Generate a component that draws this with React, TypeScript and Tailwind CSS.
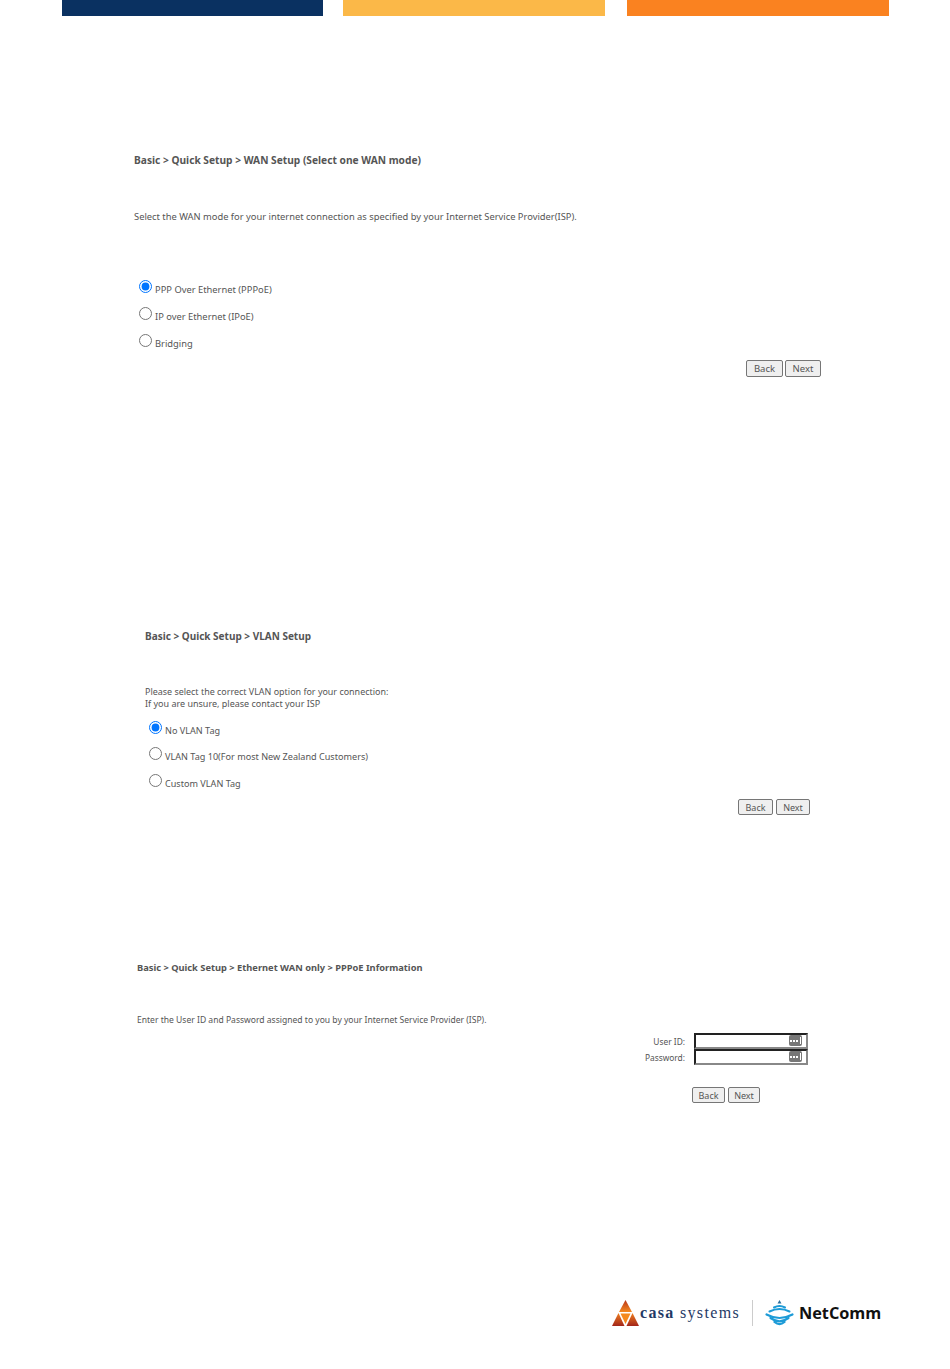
const font = "font-['Noto_Sans',sans-serif]";

const NavButtons = ({ className, back, next, h, size, gap }: { className: string; back: string; next: string; h: string; size: string; gap: string }) => (
  <div className={`flex ${gap} ${className}`}>
    <button className={`${back} ${h} ${size} rounded-[2px] border border-[#767676] bg-[#efefef] pt-[1px] text-[#555]`}>Back</button>
    <button className={`${next} ${h} ${size} rounded-[2px] border border-[#767676] bg-[#efefef] pt-[1px] text-[#555]`}>Next</button>
  </div>
);

const RadioRow = ({ name, label, checked, className, text }: { name: string; label: string; checked?: boolean; className: string; text: string }) => (
  <label className={`flex items-start ${className}`}>
    <input type="radio" name={name} defaultChecked={checked} className="m-0 h-[13px] w-[13px] shrink-0" />
    <span className={`ml-[3px] mt-[4px] leading-[12px] whitespace-nowrap text-[#555] ${text}`}>{label}</span>
  </label>
);

const KeyIcon = () => (
  <div className="flex h-[11px] w-[13px] items-center justify-center gap-[1px] rounded-[2px] bg-[#777]">
    <span className="h-[2px] w-[2px] bg-white" />
    <span className="h-[2px] w-[2px] bg-white" />
    <span className="h-[2px] w-[2px] bg-white" />
    <span className="ml-[1px] h-[7px] w-[1px] bg-white" />
  </div>
);

const Field = ({ label }: { label: string }) => (
  <div className="flex h-[16px] items-center justify-end">
    <span className="mr-[9px] pt-[2px] text-[8.4px] leading-[12px] text-[#555]">{label}</span>
    <div className="flex h-[16px] w-[114px] items-start justify-end border-2 border-t-[#222] border-l-[#222] border-r-[#888] border-b-[#888] pr-[4px]">
      <KeyIcon />
    </div>
  </div>
);

const CasaLogo = () => (
  <svg width="27" height="27" viewBox="0 0 27 27" className="shrink-0">
    <defs>
      <linearGradient id="casaTop" x1="0" y1="0" x2="0" y2="1">
        <stop offset="0" stopColor="#b8341a" />
        <stop offset="1" stopColor="#f58a1f" />
      </linearGradient>
      <linearGradient id="casaBase" x1="0" y1="0" x2="0" y2="1">
        <stop offset="0" stopColor="#f08020" />
        <stop offset="1" stopColor="#a3261a" />
      </linearGradient>
    </defs>
    <polygon points="13.5,0 20,12 7,12" fill="url(#casaTop)" />
    <polygon points="6.5,13 12.5,26 0,26" fill="url(#casaBase)" />
    <polygon points="20.5,13 27,26 14.5,26" fill="url(#casaBase)" />
    <polygon points="8.5,13.5 18.5,13.5 13.5,24" fill="#f58a1f" />
  </svg>
);

const NetCommLogo = () => (
  <svg width="29" height="27" viewBox="0 0 29 27" fill="none" stroke="#1d9bd7" strokeLinecap="round" className="shrink-0">
    <polygon points="14.5,0 16.5,3.5 12.5,3.5" fill="#2a6f9e" stroke="none" />
    <path d="M9 7.5Q14.5 4.5 20 7.5" strokeWidth="2" />
    <path d="M4.5 11.5Q14.5 6.5 24.5 11.5" strokeWidth="2" />
    <path d="M1.5 14.5Q14.5 21.5 27.5 14.5" strokeWidth="2.2" />
    <path d="M5.5 18Q14.5 24.5 23.5 18" strokeWidth="2.2" />
    <path d="M9.5 22Q14.5 26 19.5 22" strokeWidth="2.2" />
  </svg>
);

export default function App() {
  return (
    <div className={`h-[1369px] w-[950px] overflow-hidden bg-white ${font}`}>
      {/* header stripes */}
      <div className="flex pl-[62px]">
        <div className="h-[16px] w-[261px] bg-[#0a3161]" />
        <div className="ml-[20px] h-[16px] w-[262px] bg-[#fbb848]" />
        <div className="ml-[22px] h-[16px] w-[262px] bg-[#fa8220]" />
      </div>

      {/* WAN mode */}
      <div className="mt-[138px] pl-[134px]">
        <h2 className="text-[10.2px] font-bold leading-[12px] whitespace-nowrap text-[#555]">Basic &gt; Quick Setup &gt; WAN Setup (Select one WAN mode)</h2>
        <p className="mt-[45px] text-[9.35px] leading-[12px] whitespace-nowrap text-[#555]">Select the WAN mode for your internet connection as specified by your Internet Service Provider(ISP).</p>
        <div className="mt-[57px] pl-[5px]">
          <RadioRow name="wan" label="PPP Over Ethernet (PPPoE)" checked className="h-[27px]" text="text-[9.35px]" />
          <RadioRow name="wan" label="IP over Ethernet (IPoE)" className="h-[27px]" text="text-[9.35px]" />
          <RadioRow name="wan" label="Bridging" className="h-[26px]" text="text-[9.35px]" />
        </div>
      </div>
      <NavButtons className="ml-[746px]" gap="gap-[2px]" back="w-[37px]" next="w-[36px]" h="h-[17px]" size="text-[9.5px]" />

      {/* VLAN */}
      <div className="mt-[253px] pl-[145px]">
        <h2 className="text-[10px] font-bold leading-[12px] whitespace-nowrap text-[#555]">Basic &gt; Quick Setup &gt; VLAN Setup</h2>
        <p className="mt-[44px] text-[8.95px] leading-[12px] whitespace-nowrap text-[#555]">Please select the correct VLAN option for your connection:</p>
        <p className="text-[9px] leading-[12px] whitespace-nowrap text-[#555]">If you are unsure, please contact your ISP</p>
        <div className="mt-[11px] pl-[4px]">
          <RadioRow name="vlan" label="No VLAN Tag" checked className="h-[26px]" text="text-[9.1px]" />
          <RadioRow name="vlan" label="VLAN Tag 10(For most New Zealand Customers)" className="h-[27px]" text="text-[9.1px]" />
          <RadioRow name="vlan" label="Custom VLAN Tag" className="h-[25px]" text="text-[9.1px]" />
        </div>
      </div>
      <NavButtons className="ml-[738px]" gap="gap-[3px]" back="w-[35px]" next="w-[34px]" h="h-[16px]" size="text-[9px]" />

      {/* PPPoE */}
      <div className="mt-[147px] pl-[137px]">
        <h2 className="text-[9.3px] font-bold leading-[12px] whitespace-nowrap text-[#555]">Basic &gt; Quick Setup &gt; Ethernet WAN only &gt; PPPoE Information</h2>
        <p className="mt-[40px] text-[8.55px] leading-[12px] whitespace-nowrap text-[#555]">Enter the User ID and Password assigned to you by your Internet Service Provider (ISP).</p>
      </div>
      <div className="mt-[7px] w-[808px]">
        <Field label="User ID:" />
        <Field label="Password:" />
      </div>
      <NavButtons className="ml-[692px] mt-[22px]" gap="gap-[3px]" back="w-[33px]" next="w-[32px]" h="h-[16px]" size="text-[9px]" />

      {/* footer logos */}
      <div className="mt-[196px] flex h-[28px] items-center pl-[612px]">
        <CasaLogo />
        <span className="ml-[1px] font-['Liberation_Serif',serif] text-[16px] leading-[20px] tracking-[1.33px] whitespace-nowrap text-[#1f3a66]"><b>casa</b> systems</span>
        <div className="ml-[12px] h-[26px] w-px bg-[#ccc]" />
        <div className="ml-[12px]"><NetCommLogo /></div>
        <span className="ml-[5px] font-['Open_Sans',sans-serif] text-[16.3px] font-bold leading-[20px] whitespace-nowrap text-[#111]">NetComm</span>
      </div>
    </div>
  );
}
